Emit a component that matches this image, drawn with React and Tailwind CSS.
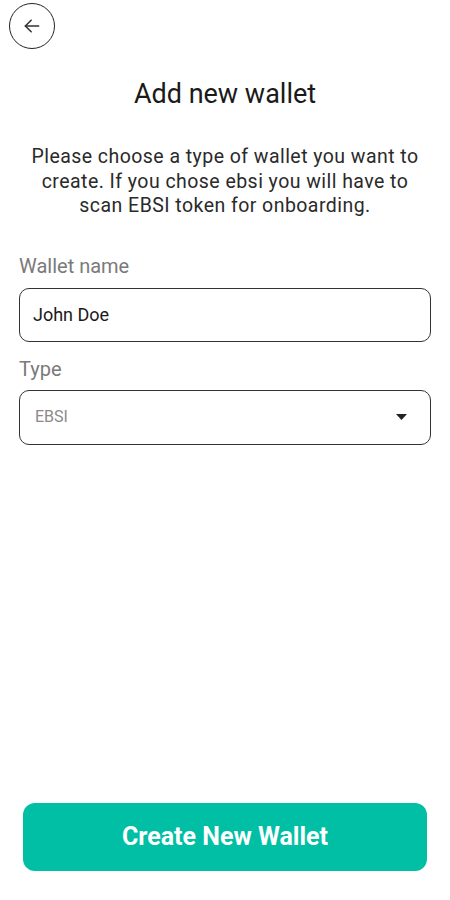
export default function App() {
  return (
    <div className="w-[450px] h-[900px] bg-white flex flex-col relative" style={{ fontFamily: "Roboto, 'Noto Sans', sans-serif" }}>
      <div className="pl-[9px] pt-[3px]">
        <button className="w-[46px] h-[46px] rounded-full border-[1.5px] border-[#222] flex items-center justify-center">
          <svg width="20" height="20" viewBox="0 0 24 24" fill="none" stroke="#333" strokeWidth="1.8" strokeLinecap="round" strokeLinejoin="round">
            <path d="M20 12H4" />
            <path d="M11 5l-7 7 7 7" />
          </svg>
        </button>
      </div>
      <h1 className="text-center text-[27px] leading-[30px] text-[#1a1a1a] mt-[30px] font-normal">Add new wallet</h1>
      <p className="text-center text-[19.5px] leading-[24.5px] tracking-[0.45px] text-[#2a2a2a] mt-[36px] px-[26px]">
        Please choose a type of wallet you want to create. If you chose ebsi you will have to scan EBSI token for onboarding.
      </p>
      <div className="px-[19px] mt-[35px] flex flex-col">
        <label className="text-[20px] leading-[24px] text-[#7a7a7a]">Wallet name</label>
        <div className="mt-[10px] h-[54px] rounded-[10px] border-[1.5px] border-[#333] flex items-center px-[13px]">
          <span className="text-[18px] text-[#1a1a1a]">John Doe</span>
        </div>
        <label className="text-[20px] leading-[24px] text-[#7a7a7a] mt-[15px]">Type</label>
        <div className="mt-[9px] h-[55px] rounded-[10px] border-[1.5px] border-[#333] flex items-center justify-between pl-[15px] pr-[23px]">
          <span className="text-[16px] text-[#8a8a8a]">EBSI</span>
          <svg width="11" height="6" viewBox="0 0 11 6">
            <path d="M0 0h11L5.5 6z" fill="#222" />
          </svg>
        </div>
      </div>
      <div className="flex-1" />
      <div className="px-[23px] pb-[29px]">
        <button className="w-full h-[68px] rounded-[12px] bg-[#00BFA5] text-white text-[25px] font-bold flex items-center justify-center">
          Create New Wallet
        </button>
      </div>
    </div>
  );
}
